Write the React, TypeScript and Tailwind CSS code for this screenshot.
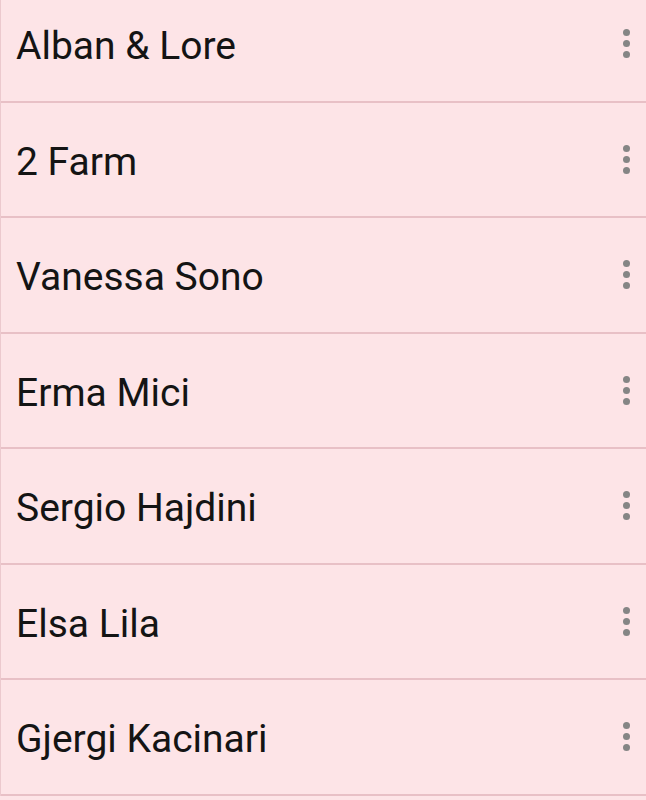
import React from "react";

const contacts = [
  "Alban & Lore",
  "2 Farm",
  "Vanessa Sono",
  "Erma Mici",
  "Sergio Hajdini",
  "Elsa Lila",
  "Gjergi Kacinari",
];

const MoreDots = () => {
  return (
    <div className="flex flex-col items-center gap-[4px]">
      <span className="block w-[7px] h-[7px] rounded-full bg-[#858585]" />
      <span className="block w-[7px] h-[7px] rounded-full bg-[#858585]" />
      <span className="block w-[7px] h-[7px] rounded-full bg-[#858585]" />
    </div>
  );
};

const App = () => {
  return (
    <div className="h-[800px] w-[646px] overflow-hidden bg-[#fde4e7] font-['Roboto',sans-serif]">
      <ul className="-mt-[13px] border-l border-[#ecc9ce]">
        {contacts.map((name, index) => {
          return (
            <li
              key={index}
              className="flex h-[115.5px] items-center justify-between border-b-2 border-[#e8c0c6] pl-[15px] pr-[16px]"
            >
              <span className="mt-[6px] text-[39px] leading-none text-[#141414]">
                {name}
              </span>
              <MoreDots />
            </li>
          );
        })}
      </ul>
    </div>
  );
};

export default App;
